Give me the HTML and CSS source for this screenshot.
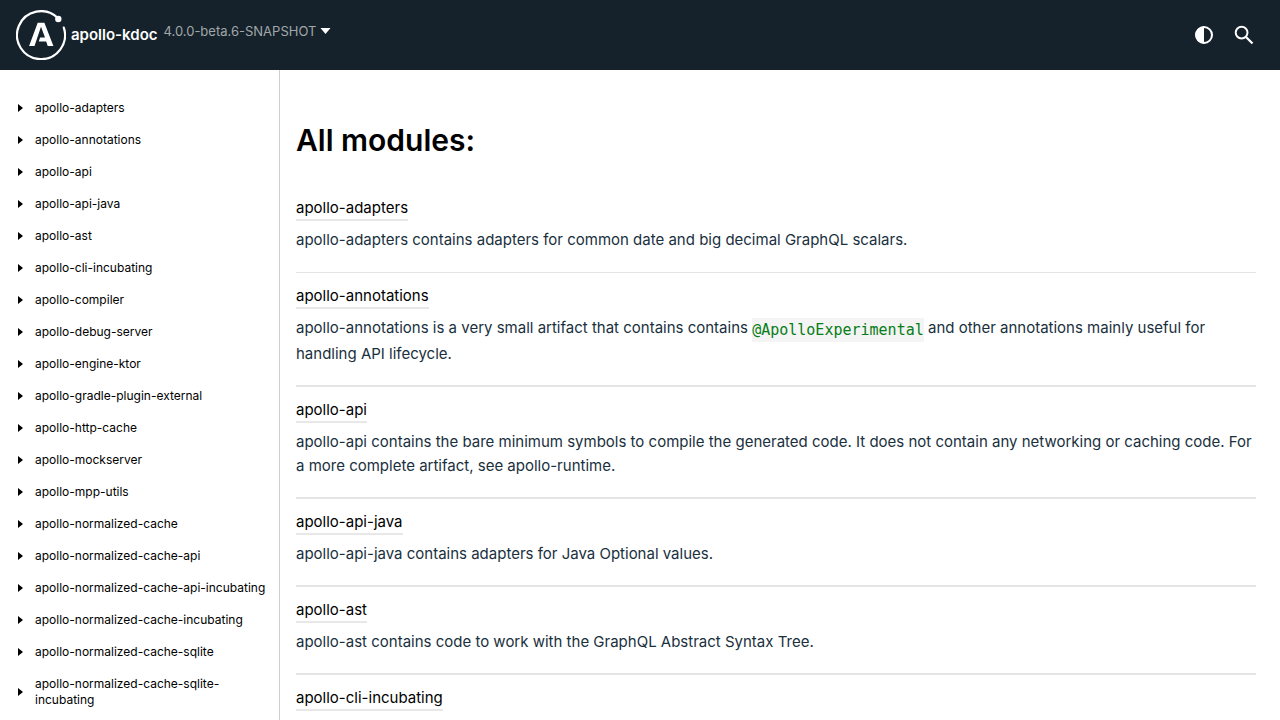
FILE: index.html
```html
<!DOCTYPE html>
<html lang="en">
<head>
<meta charset="utf-8">
<meta name="viewport" content="width=device-width, initial-scale=1">
<title>All modules</title>
<link rel="stylesheet" href="styles.css">
</head>
<body>
<header class="topbar">
  <a class="brand" href="#">
    <svg class="brand-logo" viewBox="0 0 50 50" aria-hidden="true">
      <path d="M47.8 17.6A24 24 0 1 1 41.6 7.8" fill="none" stroke="#fff" stroke-width="2.2" stroke-linecap="round"/>
      <circle cx="42.3" cy="9" r="3.2" fill="#fff"/>
      <path fill="#fff" fill-rule="evenodd" d="M21.7 12.8h6.7l9 23.1h-5.7L30.2 31.6H22.8l1.3-4.2h4.9L25 16.8 18.5 35.9H13.1z"/>
    </svg>
    <span>apollo-kdoc</span>
  </a>
  <button class="version" type="button">4.0.0-beta.6-SNAPSHOT<svg class="caret" viewBox="0 0 10 6" aria-hidden="true"><path d="M0 0h10L5 6z" fill="#fff"/></svg></button>
  <div class="tools">
    <button class="tool" type="button" aria-label="Switch theme">
      <svg viewBox="0 0 20 20" aria-hidden="true"><circle cx="10" cy="10" r="8" fill="none" stroke="#fff" stroke-width="2"/><path d="M10 1.5a8.5 8.5 0 0 0 0 17z" fill="#fff"/></svg>
    </button>
    <button class="tool" type="button" aria-label="Search">
      <svg viewBox="0 0 20 20" aria-hidden="true"><circle cx="7.6" cy="7.6" r="5.9" fill="none" stroke="#fff" stroke-width="2"/><path d="M12 12L18.5 18.5" stroke="#fff" stroke-width="2.3"/></svg>
    </button>
  </div>
</header>
<div class="layout">
  <nav class="sidebar" aria-label="Modules">
    <ul class="tree">
      <li class="node"><button class="toggle" type="button" aria-label="Expand"></button><a href="#">apollo-adapters</a></li>
      <li class="node"><button class="toggle" type="button" aria-label="Expand"></button><a href="#">apollo-annotations</a></li>
      <li class="node"><button class="toggle" type="button" aria-label="Expand"></button><a href="#">apollo-api</a></li>
      <li class="node"><button class="toggle" type="button" aria-label="Expand"></button><a href="#">apollo-api-java</a></li>
      <li class="node"><button class="toggle" type="button" aria-label="Expand"></button><a href="#">apollo-ast</a></li>
      <li class="node"><button class="toggle" type="button" aria-label="Expand"></button><a href="#">apollo-cli-incubating</a></li>
      <li class="node"><button class="toggle" type="button" aria-label="Expand"></button><a href="#">apollo-compiler</a></li>
      <li class="node"><button class="toggle" type="button" aria-label="Expand"></button><a href="#">apollo-debug-server</a></li>
      <li class="node"><button class="toggle" type="button" aria-label="Expand"></button><a href="#">apollo-engine-ktor</a></li>
      <li class="node"><button class="toggle" type="button" aria-label="Expand"></button><a href="#">apollo-gradle-plugin-external</a></li>
      <li class="node"><button class="toggle" type="button" aria-label="Expand"></button><a href="#">apollo-http-cache</a></li>
      <li class="node"><button class="toggle" type="button" aria-label="Expand"></button><a href="#">apollo-mockserver</a></li>
      <li class="node"><button class="toggle" type="button" aria-label="Expand"></button><a href="#">apollo-mpp-utils</a></li>
      <li class="node"><button class="toggle" type="button" aria-label="Expand"></button><a href="#">apollo-normalized-cache</a></li>
      <li class="node"><button class="toggle" type="button" aria-label="Expand"></button><a href="#">apollo-normalized-cache-api</a></li>
      <li class="node"><button class="toggle" type="button" aria-label="Expand"></button><a href="#">apollo-normalized-cache-api-incubating</a></li>
      <li class="node"><button class="toggle" type="button" aria-label="Expand"></button><a href="#">apollo-normalized-cache-incubating</a></li>
      <li class="node"><button class="toggle" type="button" aria-label="Expand"></button><a href="#">apollo-normalized-cache-sqlite</a></li>
      <li class="node"><button class="toggle" type="button" aria-label="Expand"></button><a href="#">apollo-normalized-cache-sqlite-<wbr>incubating</a></li>
    </ul>
  </nav>
  <main class="content">
    <h1 class="title">All modules:</h1>
    <section class="module"><a class="module-link" href="#">apollo-adapters</a><p class="module-text">apollo-adapters contains adapters for common date and big decimal GraphQL scalars.</p></section>
    <section class="module"><a class="module-link" href="#">apollo-annotations</a><p class="module-text">apollo-annotations is a very small artifact that contains contains <code class="code">@ApolloExperimental</code> and other annotations mainly useful for handling API lifecycle.</p></section>
    <section class="module"><a class="module-link" href="#">apollo-api</a><p class="module-text">apollo-api contains the bare minimum symbols to compile the generated code. It does not contain any networking or caching code. For a more complete artifact, see apollo-runtime.</p></section>
    <section class="module"><a class="module-link" href="#">apollo-api-java</a><p class="module-text">apollo-api-java contains adapters for Java Optional values.</p></section>
    <section class="module"><a class="module-link" href="#">apollo-ast</a><p class="module-text">apollo-ast contains code to work with the GraphQL Abstract Syntax Tree.</p></section>
    <section class="module"><a class="module-link" href="#">apollo-cli-incubating</a><p class="module-text">This contains <code class="code">apollo-tooling</code></p></section>
  </main>
</div>
</body>
</html>
```
FILE: styles.css
```css
* { box-sizing: border-box; }

body {
  margin: 0;
  height: 100vh;
  display: flex;
  flex-direction: column;
  overflow: hidden;
  background: #fff;
  color: #000;
  font-family: Inter, "Liberation Sans", sans-serif;
  font-size: 15px;
  line-height: 24px;
}

a { color: inherit; text-decoration: none; }

button {
  padding: 0;
  border: 0;
  background: none;
  color: inherit;
  font: inherit;
  cursor: pointer;
}

.topbar {
  flex: none;
  display: flex;
  align-items: center;
  height: 70px;
  padding: 0 24px 0 16px;
  background: #15222b;
  color: #fff;
}

.brand {
  display: flex;
  align-items: center;
  gap: 5px;
  font-weight: 600;
  font-size: 15px;
}

.brand-logo { width: 50px; height: 50px; }

.version {
  display: flex;
  align-items: center;
  gap: 4px;
  margin-left: 6px;
  padding-bottom: 8px;
  color: #a1a7aa;
  font-size: 13px;
}

.caret { width: 11px; height: 6px; }

.tools { display: flex; margin-left: auto; gap: 16px; }

.tool {
  display: grid;
  place-items: center;
  width: 24px;
  height: 24px;
}

.tool svg { width: 20px; height: 20px; }

.layout { flex: 1; display: flex; min-height: 0; }

.sidebar {
  flex: none;
  width: 280px;
  padding-top: 22px;
  border-right: 1px solid #cfcfcf;
  overflow: hidden;
}

.tree { margin: 0; padding: 0; list-style: none; }

.node {
  display: flex;
  align-items: center;
  padding: 8px 10px 8px 16px;
  font-size: 12px;
  line-height: 16px;
}

.toggle {
  flex: none;
  width: 19px;
  height: 16px;
}

.toggle::before {
  content: "";
  display: block;
  width: 0;
  margin-left: 2px;
  border-left: 5px solid #000;
  border-top: 4px solid transparent;
  border-bottom: 4px solid transparent;
}

.content {
  flex: 1;
  min-width: 0;
  padding: 50px 24px 0 16px;
  overflow: hidden;
}

.title {
  margin: 0 0 24px;
  font-size: 30px;
  font-weight: 600;
  line-height: 40px;
}

.module { padding: 11px 0 19px; border-bottom: 2px solid #e5e5e5; }

.module:first-of-type { padding: 12px 0 20px; border-bottom-width: 1px; }

.module-link {
  display: block;
  width: fit-content;
  border-bottom: 2px solid #e8e8e8;
  line-height: 23px;
}

.module-text { margin: 7px 0 0; color: #19303d; }

.code {
  padding: 3px 0;
  background: #f4f4f4;
  color: #067d17;
  font-family: "DejaVu Sans Mono", monospace;
  font-size: 15px;
  vertical-align: -2px;
}
```
